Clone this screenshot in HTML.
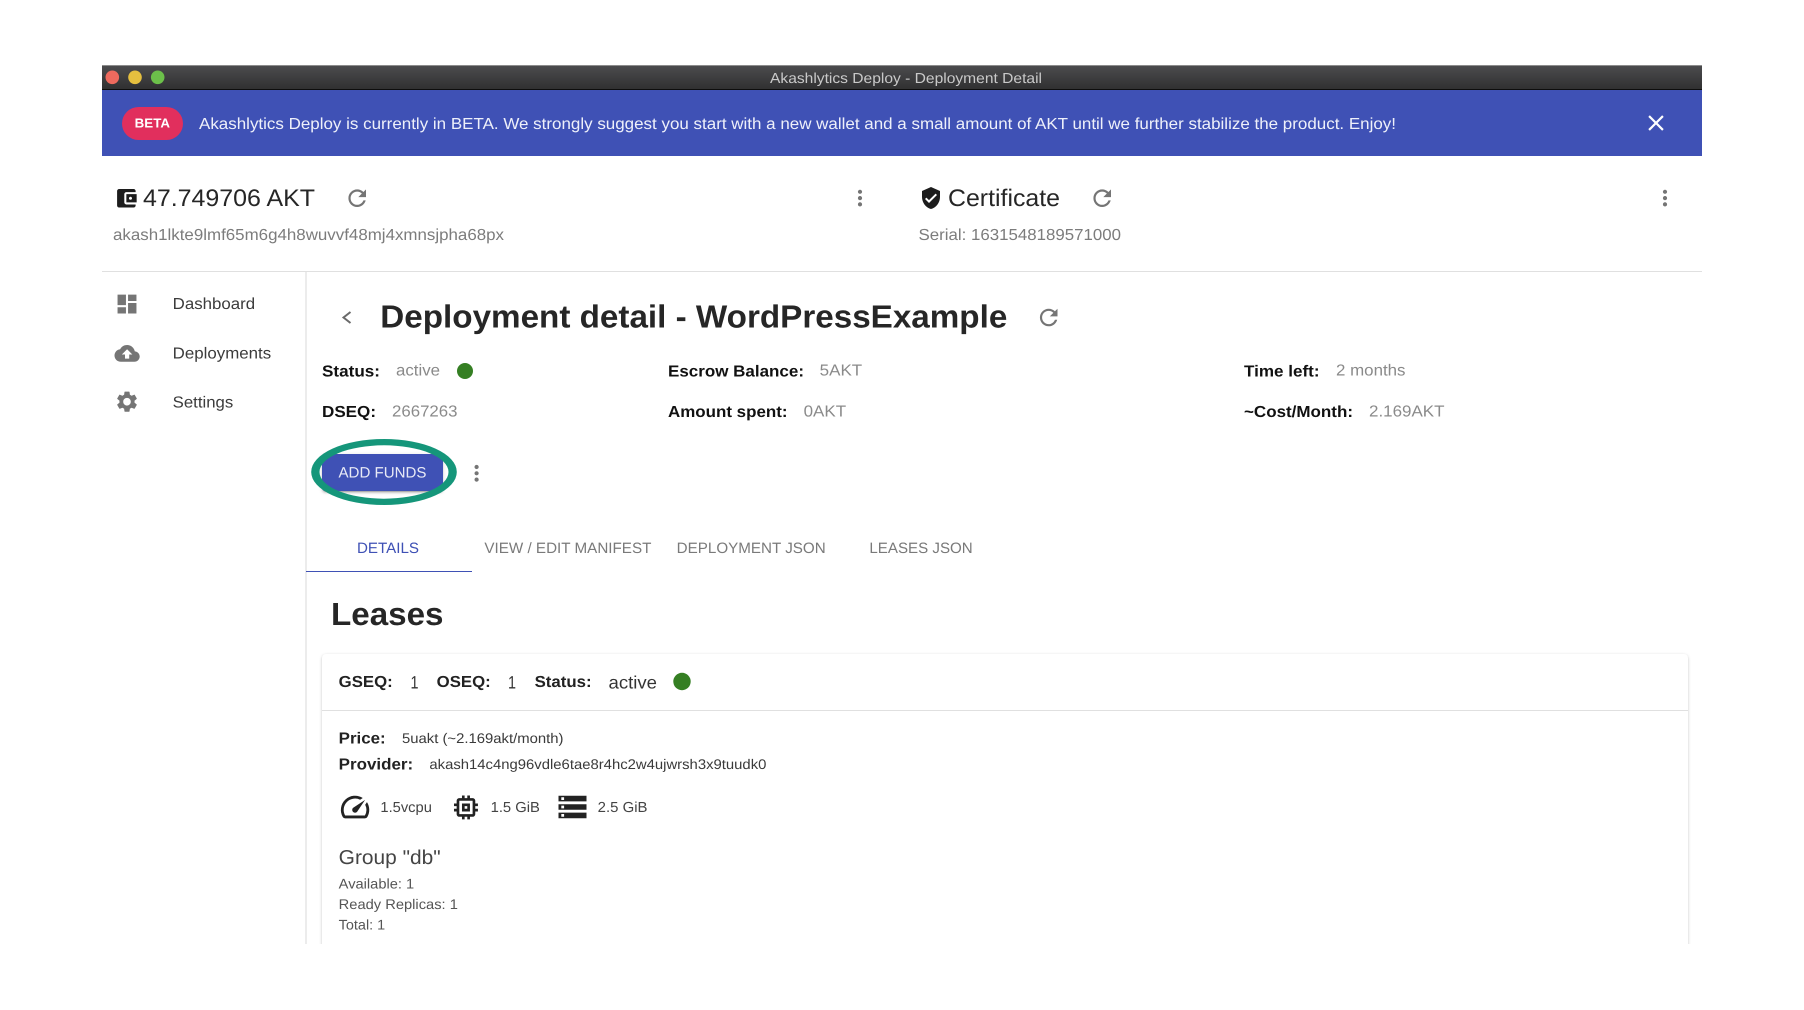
<!DOCTYPE html>
<html lang="en">
<head>
<meta charset="utf-8">
<title>Akashlytics Deploy - Deployment Detail</title>
<style>
html,body{margin:0;padding:0;width:1804px;height:1010px;background:#fff;overflow:hidden}
#wrap{position:absolute;left:0;top:0;width:1804px;height:1010px;overflow:hidden;filter:blur(.35px)}
.abs{position:absolute}
#titlebar{left:102px;top:65px;width:1600px;height:25px;box-sizing:border-box;background:linear-gradient(#4b4b4d,#303031);border-top:1px solid #8c8c8c;border-bottom:1px solid #0d0d0d}
#banner{left:102px;top:90px;width:1600px;height:66px;background:#3f51b5}
#chip{left:121.7px;top:107px;width:61px;height:33px;border-radius:16.5px;background:#e12f5d}
#hr{left:102px;top:271px;width:1600px;height:1px;background:#e0e0e0}
#side{left:304.5px;top:272px;width:2px;height:672px;background:#ececec}
#clip{left:0;top:0;width:1804px;height:944px;overflow:hidden}
#card{left:322px;top:654px;width:1366px;height:400px;background:#fff;border-radius:4px;box-shadow:0 1px 3px rgba(0,0,0,.2),0 1px 1px rgba(0,0,0,.1)}
#carddiv{left:322px;top:710px;width:1366px;height:1px;background:#e0e0e0}
#tabline{left:305.5px;top:571px;width:166.5px;height:1.4px;background:#3f51b5}
#btn{left:321.7px;top:454px;width:121.6px;height:37px;border-radius:3px;background:#3f51b5;box-shadow:0 3px 1px -2px rgba(0,0,0,.2),0 2px 2px 0 rgba(0,0,0,.14),0 1px 5px 0 rgba(0,0,0,.12)}
svg{position:absolute;left:0;top:0}
text{font-family:"Liberation Sans",sans-serif;text-rendering:geometricPrecision}
.b{font-weight:700}
</style>
</head>
<body>
<div id="wrap">
<div class="abs" id="titlebar"></div>
<div class="abs" id="banner"></div>
<div class="abs" id="chip"></div>
<div class="abs" id="hr"></div>
<div class="abs" id="clip">
  <div class="abs" id="side"></div>
  <div class="abs" id="card"></div>
</div>
<div class="abs" id="carddiv"></div>
<div class="abs" id="tabline"></div>
<div class="abs" id="btn"></div>
<svg width="1804" height="1010" viewBox="0 0 1804 1010" xmlns="http://www.w3.org/2000/svg">
<defs>
<path id="refresh" d="M17.65 6.35C16.2 4.9 14.21 4 12 4c-4.42 0-7.99 3.58-7.99 8s3.57 8 7.99 8c3.73 0 6.84-2.55 7.73-6h-2.08c-.82 2.33-3.04 4-5.65 4-3.31 0-6-2.69-6-6s2.69-6 6-6c1.66 0 3.14.69 4.22 1.78L13 11h7V4l-2.35 2.35z"/>
<path id="kebab" d="M12 8c1.1 0 2-.9 2-2s-.9-2-2-2-2 .9-2 2 .9 2 2 2zm0 2c-1.1 0-2 .9-2 2s.9 2 2 2 2-.9 2-2-.9-2-2-2zm0 6c-1.1 0-2 .9-2 2s.9 2 2 2 2-.9 2-2-.9-2-2-2z"/>
</defs>

<!-- traffic lights -->
<circle cx="112.3" cy="77.3" r="6.8" fill="#ee6a5e"/>
<circle cx="135" cy="77.3" r="6.8" fill="#e5bf3f"/>
<circle cx="157.7" cy="77.3" r="6.8" fill="#6cc04a"/>
<text x="770" y="83" font-size="14.5" fill="#c9c9c9" textLength="272" lengthAdjust="spacingAndGlyphs">Akashlytics Deploy - Deployment Detail</text>

<!-- banner -->
<text class="b" x="134.7" y="127.7" font-size="13" fill="#fff" textLength="35.3" lengthAdjust="spacingAndGlyphs">BETA</text>
<text x="199" y="129" font-size="16" fill="#eef0fa" textLength="1197" lengthAdjust="spacingAndGlyphs">Akashlytics Deploy is currently in BETA. We strongly suggest you start with a new wallet and a small amount of AKT until we further stabilize the product. Enjoy!</text>
<path transform="translate(1642.8 109.8) scale(1.1)" fill="#fff" d="M19 6.41L17.59 5 12 10.59 6.41 5 5 6.41 10.59 12 5 17.59 6.41 19 12 13.41 17.59 19 19 17.59 13.41 12z"/>

<!-- wallet row -->
<path transform="translate(114 185.9) scale(1.03)" fill="#1c1c1c" d="M21 18v1c0 1.1-.9 2-2 2H5c-1.11 0-2-.9-2-2V5c0-1.1.89-2 2-2h14c1.1 0 2 .9 2 2v1h-9c-1.11 0-2 .9-2 2v8c0 1.1.89 2 2 2h9zm-9-2h10V8H12v8zm4-2.5c-.83 0-1.5-.67-1.5-1.5s.67-1.5 1.5-1.5 1.5.67 1.5 1.5-.67 1.5-1.5 1.5z"/>
<text x="143" y="206" font-size="24" fill="#262626" textLength="172" lengthAdjust="spacingAndGlyphs">47.749706 AKT</text>
<use href="#refresh" transform="translate(344 185) scale(1.1)" fill="#757575"/>
<use href="#kebab" transform="translate(847.4 185.5) scale(1.05)" fill="#757575"/>
<text x="113" y="240" font-size="16" fill="#7c7c7c" textLength="391" lengthAdjust="spacingAndGlyphs">akash1lkte9lmf65m6g4h8wuvvf48mj4xmnsjpha68px</text>

<!-- certificate row -->
<path transform="translate(919 186)" fill="#1c1c1c" d="M12 1L3 5v6c0 5.55 3.84 10.74 9 12 5.16-1.26 9-6.45 9-12V5l-9-4zm-2 16l-4-4 1.41-1.41L10 14.17l6.59-6.59L18 9l-8 8z"/>
<text x="948" y="206" font-size="24" fill="#262626" textLength="112" lengthAdjust="spacingAndGlyphs">Certificate</text>
<use href="#refresh" transform="translate(1089 185) scale(1.1)" fill="#757575"/>
<use href="#kebab" transform="translate(1652.4 185.5) scale(1.05)" fill="#757575"/>
<text x="918.5" y="240" font-size="16" fill="#7c7c7c" textLength="202.5" lengthAdjust="spacingAndGlyphs">Serial: 1631548189571000</text>

<!-- sidebar -->
<path transform="translate(114.4 291.5) scale(1.05)" fill="#757575" d="M3 13h8V3H3v10zm0 8h8v-6H3v6zm10 0h8V11h-8v10zm0-18v6h8V3h-8z"/>
<text x="172.7" y="309" font-size="16" fill="#3c3c3c" textLength="82.5" lengthAdjust="spacingAndGlyphs">Dashboard</text>
<path transform="translate(114.5 340.8) scale(1.05)" fill="#757575" d="M19.35 10.04C18.67 6.59 15.64 4 12 4 9.11 4 6.6 5.64 5.35 8.04 2.34 8.36 0 10.91 0 14c0 3.31 2.69 6 6 6h13c2.76 0 5-2.24 5-5 0-2.64-2.05-4.78-4.65-4.96zM14 13v4h-4v-4H7l5-5 5 5h-3z"/>
<text x="172.7" y="358.5" font-size="16" fill="#3c3c3c" textLength="98.5" lengthAdjust="spacingAndGlyphs">Deployments</text>
<path transform="translate(114.4 389.1) scale(1.05)" fill="#757575" d="M19.14,12.94c0.04-0.3,0.06-0.61,0.06-0.94c0-0.32-0.02-0.64-0.07-0.94l2.03-1.58c0.18-0.14,0.23-0.41,0.12-0.61l-1.92-3.32c-0.12-0.22-0.37-0.29-0.59-0.22l-2.39,0.96c-0.5-0.38-1.03-0.7-1.62-0.94L14.4,2.81c-0.04-0.24-0.24-0.41-0.48-0.41h-3.84c-0.24,0-0.43,0.17-0.47,0.41L9.25,5.35C8.66,5.59,8.12,5.92,7.63,6.29L5.24,5.33c-0.22-0.08-0.47,0-0.59,0.22L2.74,8.87C2.62,9.08,2.66,9.34,2.86,9.48l2.03,1.58C4.84,11.36,4.8,11.69,4.8,12s0.02,0.64,0.07,0.94l-2.03,1.58c-0.18,0.14-0.23,0.41-0.12,0.61l1.92,3.32c0.12,0.22,0.37,0.29,0.59,0.22l2.39-0.96c0.5,0.38,1.03,0.7,1.62,0.94l0.36,2.54c0.05,0.24,0.24,0.41,0.48,0.41h3.84c0.24,0,0.44-0.17,0.47-0.41l0.36-2.54c0.59-0.24,1.13-0.56,1.62-0.94l2.39,0.96c0.22,0.08,0.47,0,0.59-0.22l1.92-3.32c0.12-0.22,0.07-0.47-0.12-0.61L19.14,12.94z M12,15.6c-1.98,0-3.6-1.62-3.6-3.6s1.62-3.6,3.6-3.6s3.6,1.62,3.6,3.6S13.98,15.6,12,15.6z"/>
<text x="172.7" y="407.5" font-size="16" fill="#3c3c3c" textLength="60.5" lengthAdjust="spacingAndGlyphs">Settings</text>

<!-- heading -->
<polyline points="350.5,312 343.5,317.5 350.5,323" fill="none" stroke="#6a6a6a" stroke-width="2"/>
<text class="b" x="380.3" y="327.5" font-size="32" fill="#262626" textLength="627" lengthAdjust="spacingAndGlyphs">Deployment detail - WordPressExample</text>
<use href="#refresh" transform="translate(1035.5 304.3) scale(1.1)" fill="#757575"/>

<!-- info grid -->
<text class="b" x="322" y="376.5" font-size="16" fill="#111" textLength="58" lengthAdjust="spacingAndGlyphs">Status:</text>
<text x="396" y="375.5" font-size="16" fill="#8a8a8a" textLength="44" lengthAdjust="spacingAndGlyphs">active</text>
<circle cx="465" cy="371" r="8" fill="#357f23"/>
<text class="b" x="322" y="417" font-size="16" fill="#111" textLength="54" lengthAdjust="spacingAndGlyphs">DSEQ:</text>
<text x="392" y="416.5" font-size="16" fill="#8a8a8a" textLength="65.5" lengthAdjust="spacingAndGlyphs">2667263</text>

<text class="b" x="668" y="376.5" font-size="16" fill="#111" textLength="136" lengthAdjust="spacingAndGlyphs">Escrow Balance:</text>
<text x="819.7" y="375.5" font-size="16" fill="#8a8a8a" textLength="42.5" lengthAdjust="spacingAndGlyphs">5AKT</text>
<text class="b" x="668" y="417" font-size="16" fill="#111" textLength="119.5" lengthAdjust="spacingAndGlyphs">Amount spent:</text>
<text x="803.6" y="416.5" font-size="16" fill="#8a8a8a" textLength="42.5" lengthAdjust="spacingAndGlyphs">0AKT</text>

<text class="b" x="1244" y="376.5" font-size="16" fill="#111" textLength="75.5" lengthAdjust="spacingAndGlyphs">Time left:</text>
<text x="1336" y="375.5" font-size="16" fill="#8a8a8a" textLength="69.5" lengthAdjust="spacingAndGlyphs">2 months</text>
<text class="b" x="1244" y="417" font-size="16" fill="#111" textLength="109" lengthAdjust="spacingAndGlyphs">~Cost/Month:</text>
<text x="1369" y="416.5" font-size="16" fill="#8a8a8a" textLength="75.5" lengthAdjust="spacingAndGlyphs">2.169AKT</text>

<!-- button + annotation -->
<text x="338.5" y="477.5" font-size="15" fill="#e8eaf6" textLength="88" lengthAdjust="spacingAndGlyphs">ADD FUNDS</text>
<path fill="#15967a" fill-rule="evenodd" d="M311.2 472a72.8 33 0 1 0 145.6 0a72.8 33 0 1 0 -145.6 0zM319.5 472a64.5 26.7 0 1 1 129 0a64.5 26.7 0 1 1 -129 0z"/>
<use href="#kebab" transform="translate(464 460.7) scale(1.05)" fill="#757575"/>

<!-- tabs -->
<text x="357" y="553" font-size="15" fill="#3f51b5" textLength="62" lengthAdjust="spacingAndGlyphs">DETAILS</text>
<text x="484.4" y="553" font-size="15" fill="#7a7a7a" textLength="167" lengthAdjust="spacingAndGlyphs">VIEW / EDIT MANIFEST</text>
<text x="676.7" y="553" font-size="15" fill="#7a7a7a" textLength="149" lengthAdjust="spacingAndGlyphs">DEPLOYMENT JSON</text>
<text x="869.4" y="553" font-size="15" fill="#7a7a7a" textLength="103.3" lengthAdjust="spacingAndGlyphs">LEASES JSON</text>

<!-- leases -->
<text class="b" x="331" y="625" font-size="32" fill="#262626" textLength="112.5" lengthAdjust="spacingAndGlyphs">Leases</text>

<text class="b" x="338.7" y="687" font-size="16" fill="#222" textLength="54" lengthAdjust="spacingAndGlyphs">GSEQ:</text>
<text x="410.5" y="688.5" font-size="18" fill="#333" textLength="8" lengthAdjust="spacingAndGlyphs">1</text>
<text class="b" x="436.7" y="687" font-size="16" fill="#222" textLength="54" lengthAdjust="spacingAndGlyphs">OSEQ:</text>
<text x="508" y="688.5" font-size="18" fill="#333" textLength="8" lengthAdjust="spacingAndGlyphs">1</text>
<text class="b" x="534.6" y="687" font-size="16" fill="#222" textLength="57" lengthAdjust="spacingAndGlyphs">Status:</text>
<text x="608.5" y="688.5" font-size="18" fill="#333" textLength="48.5" lengthAdjust="spacingAndGlyphs">active</text>
<circle cx="682" cy="681.5" r="8.7" fill="#357f23"/>

<text class="b" x="338.7" y="743.5" font-size="16" fill="#222" textLength="47" lengthAdjust="spacingAndGlyphs">Price:</text>
<text x="402" y="743" font-size="14" fill="#3a3a3a" textLength="161.5" lengthAdjust="spacingAndGlyphs">5uakt (~2.169akt/month)</text>
<text class="b" x="338.7" y="769.5" font-size="16" fill="#222" textLength="74.5" lengthAdjust="spacingAndGlyphs">Provider:</text>
<text x="429.4" y="769" font-size="14" fill="#3a3a3a" textLength="337" lengthAdjust="spacingAndGlyphs">akash14c4ng96vdle6tae8r4hc2w4ujwrsh3x9tuudk0</text>

<path transform="translate(338 790) scale(1.42)" fill="#222" d="M20.38 8.57l-1.23 1.85a8 8 0 0 1-.22 7.58H5.07A8 8 0 0 1 15.58 6.85l1.85-1.23A10 10 0 0 0 3.35 19a2 2 0 0 0 1.72 1h13.85a2 2 0 0 0 1.74-1 10 10 0 0 0-.27-10.44zm-9.79 6.84a2 2 0 0 0 2.83 0l5.66-8.49-8.49 5.66a2 2 0 0 0 0 2.83z"/>
<text x="380.4" y="812.2" font-size="14.5" fill="#444" textLength="51.5" lengthAdjust="spacingAndGlyphs">1.5vcpu</text>
<path transform="translate(450 791.5) scale(1.33)" fill="#222" d="M15 9H9v6h6V9zm-2 4h-2v-2h2v2zm8-2V9h-2V7c0-1.1-.9-2-2-2h-2V3h-2v2h-2V3H9v2H7c-1.1 0-2 .9-2 2v2H3v2h2v2H3v2h2v2c0 1.1.9 2 2 2h2v2h2v-2h2v2h2v-2h2c1.1 0 2-.9 2-2v-2h2v-2h-2v-2h2zm-4 6H7V7h10v10z"/>
<text x="490.6" y="812.2" font-size="14.5" fill="#444" textLength="49.3" lengthAdjust="spacingAndGlyphs">1.5 GiB</text>
<path transform="translate(555.7 790.2) scale(1.4)" fill="#222" d="M2 20h20v-4H2v4zm2-3h2v2H4v-2zM2 4v4h20V4H2zm4 3H4V5h2v2zm-4 7h20v-4H2v4zm2-3h2v2H4v-2z"/>
<text x="597.7" y="812.2" font-size="14.5" fill="#444" textLength="49.8" lengthAdjust="spacingAndGlyphs">2.5 GiB</text>

<text x="338.7" y="864" font-size="20" fill="#444" textLength="102" lengthAdjust="spacingAndGlyphs">Group "db"</text>
<text x="338.7" y="888.5" font-size="14" fill="#555" textLength="75.5" lengthAdjust="spacingAndGlyphs">Available: 1</text>
<text x="338.7" y="909" font-size="14" fill="#555" textLength="119.2" lengthAdjust="spacingAndGlyphs">Ready Replicas: 1</text>
<text x="338.7" y="929.5" font-size="14" fill="#555" textLength="46.5" lengthAdjust="spacingAndGlyphs">Total: 1</text>
</svg>
</div>
</body>
</html>
